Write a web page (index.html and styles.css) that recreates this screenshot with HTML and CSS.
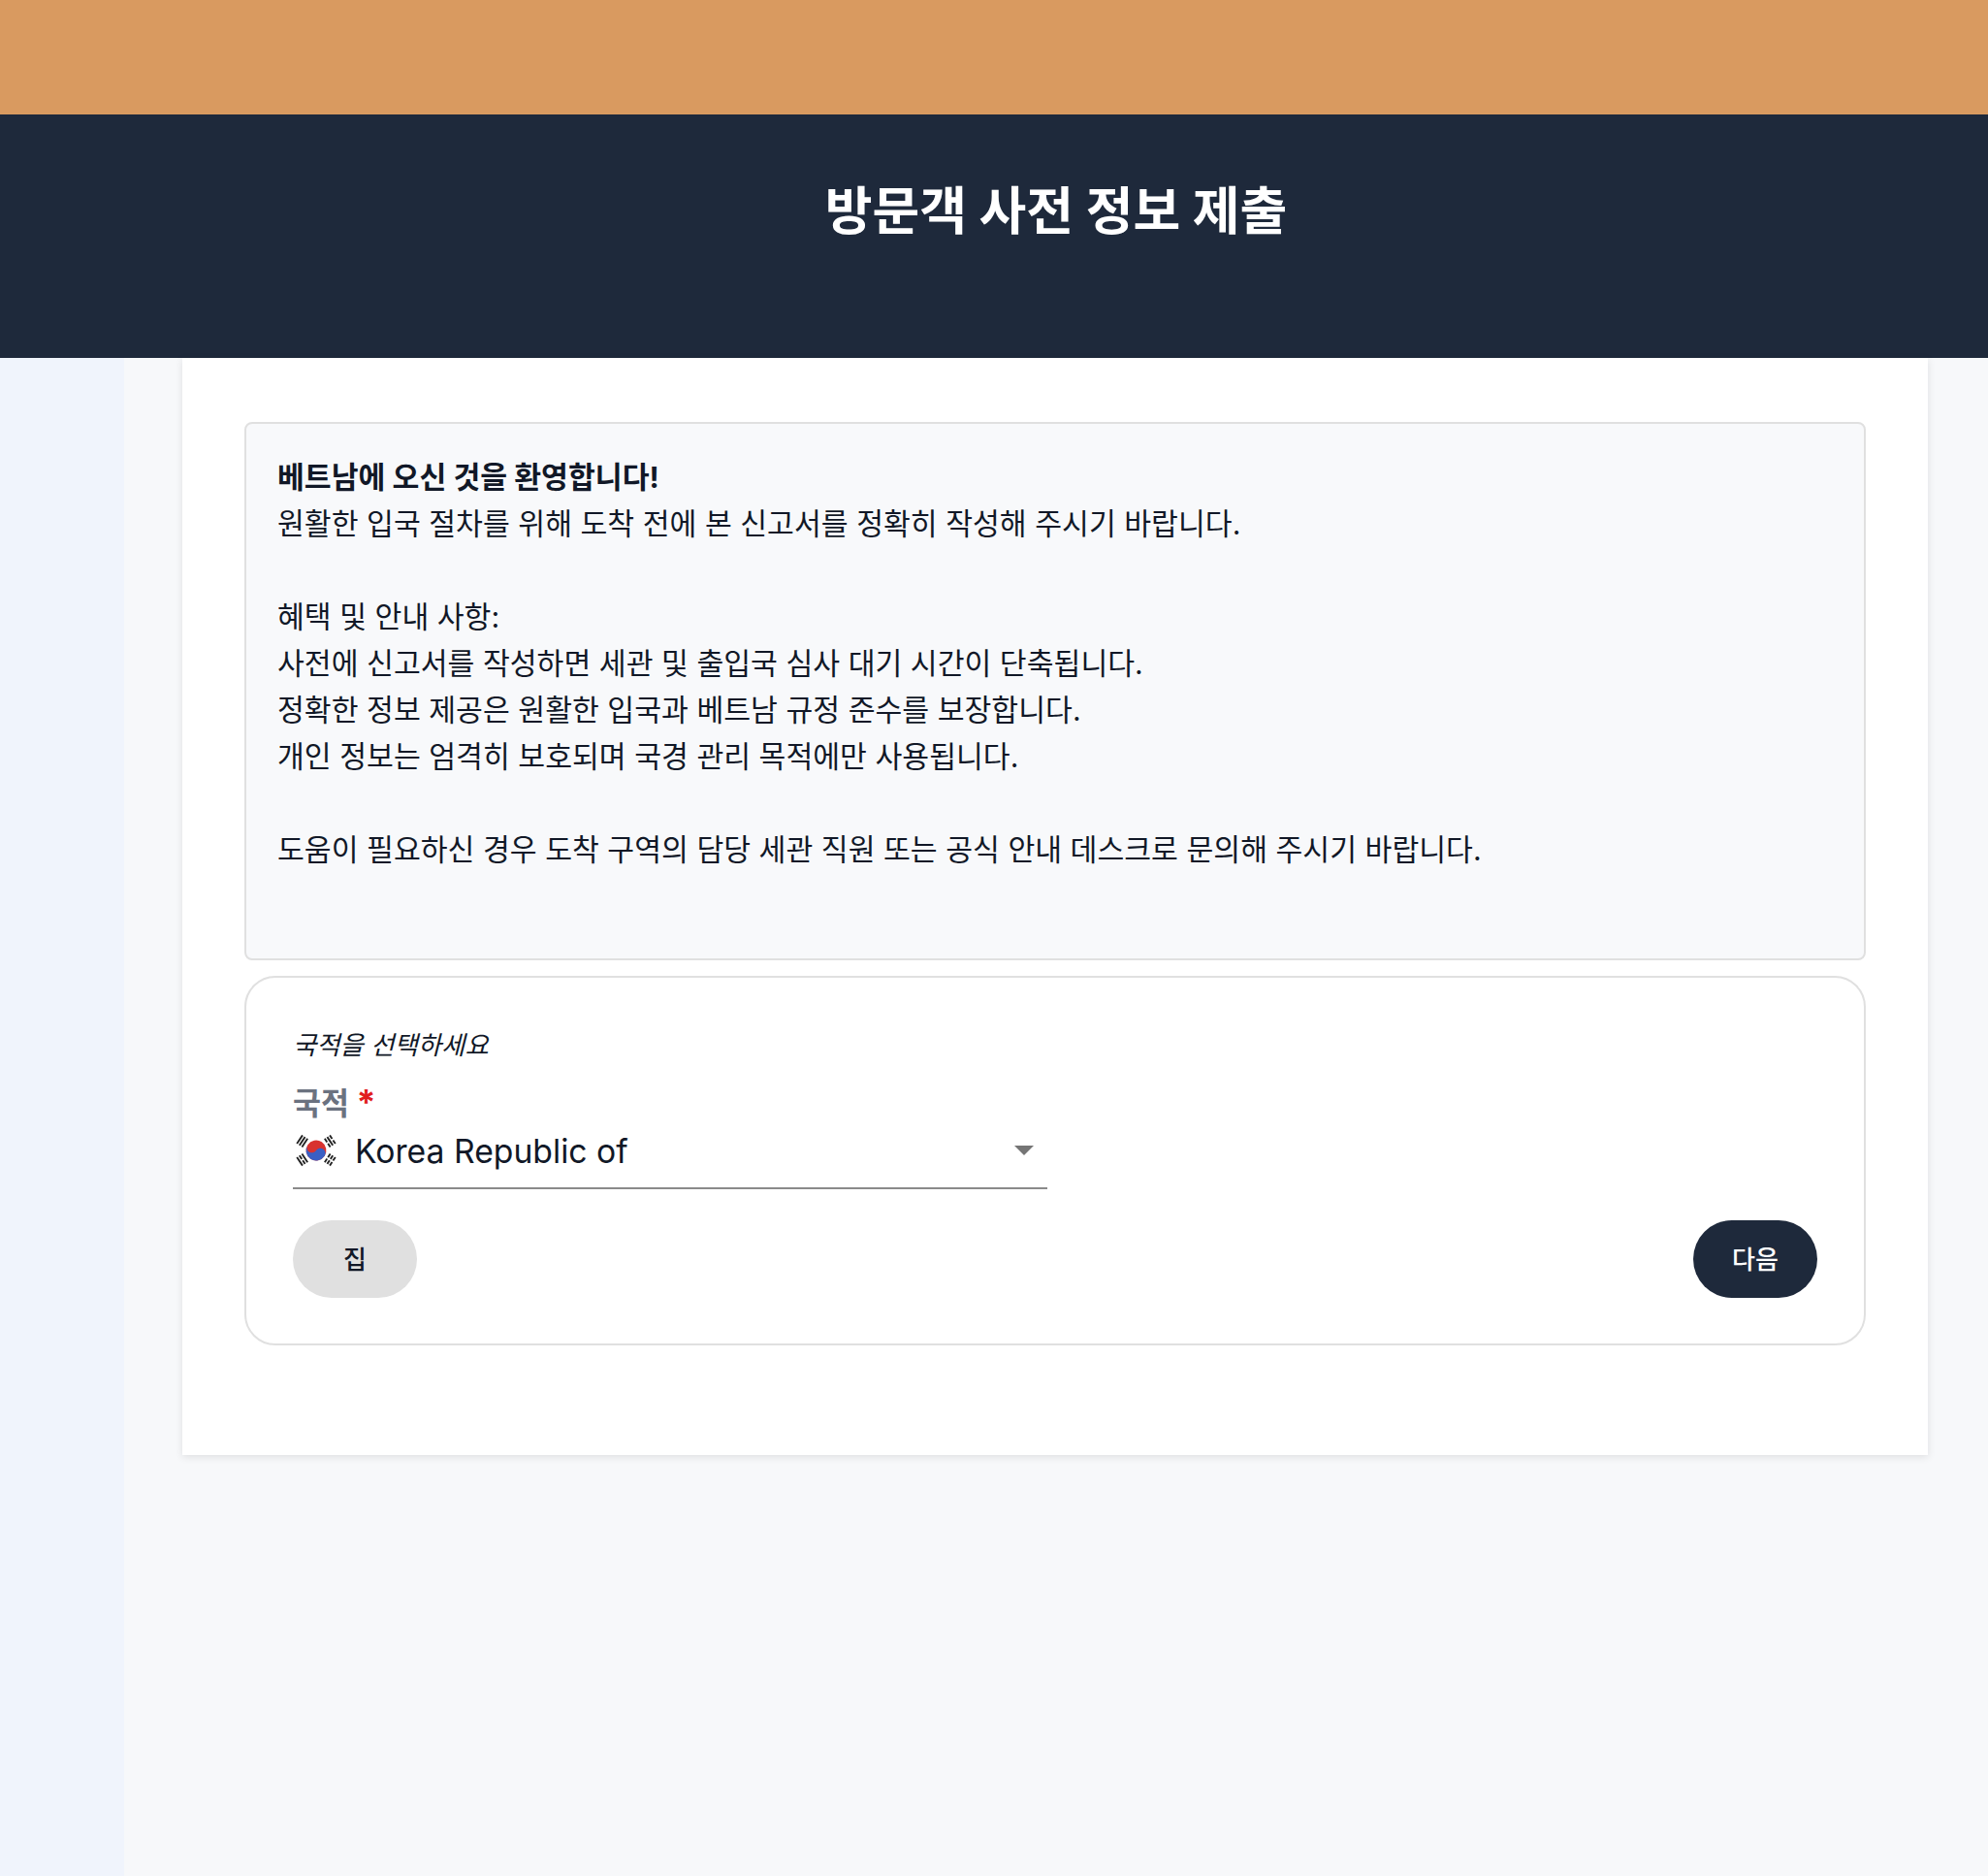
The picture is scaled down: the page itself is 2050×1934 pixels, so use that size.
FILE: index.html
```html
<!DOCTYPE html>
<html lang="ko">
<head>
    <meta charset="UTF-8">
    <title>방문객 사전 정보 제출</title>
    <link rel="stylesheet" href="styles.css">
</head>
<body>
    <!-- Top strip -->
    <div class="top-strip"></div>

    <!-- Header -->
    <div class="site-header">
        <div class="header-gap"></div>
        <h1 class="site-title">방문객 사전 정보 제출</h1>
    </div>

    <div class="page">
        <div class="side-panel"></div>

        <div class="main">
            <div class="card">
                <!-- Welcome notice -->
                <div class="notice">
                    <p class="notice-title">베트남에 오신 것을 환영합니다!</p>
                    <p>원활한 입국 절차를 위해 도착 전에 본 신고서를 정확히 작성해 주시기 바랍니다.</p>
                    <p class="blank"></p>
                    <p>혜택 및 안내 사항:</p>
                    <p>사전에 신고서를 작성하면 세관 및 출입국 심사 대기 시간이 단축됩니다.</p>
                    <p>정확한 정보 제공은 원활한 입국과 베트남 규정 준수를 보장합니다.</p>
                    <p>개인 정보는 엄격히 보호되며 국경 관리 목적에만 사용됩니다.</p>
                    <p class="blank"></p>
                    <p>도움이 필요하신 경우 도착 구역의 담당 세관 직원 또는 공식 안내 데스크로 문의해 주시기 바랍니다.</p>
                </div>

                <!-- Nationality form -->
                <div class="form-box">
                    <div class="form-hint">국적을 선택하세요</div>
                    <div class="field-label">국적 <span class="required">*</span></div>
                    <div class="select-field">
                        <svg class="flag" viewBox="-23 -16 46 32" aria-hidden="true">
                            <g transform="rotate(33.69)">
                                <circle r="10" fill="#d8322f"/>
                                <path d="M-10 0A5 5 0 0 0 0 0A5 5 0 0 1 10 0A10 10 0 0 1-10 0Z" fill="#3a5fc4"/>
                            </g>
                            <g stroke="#222" stroke-width="1.8" fill="none">
                                <path transform="rotate(213.69)" d="M13.5-5V5M16.5-5V5M19.5-5V5"/>
                                <path transform="rotate(-33.69)" d="M13.5-5V-.8M13.5.8V5M16.5-5V5M19.5-5V-.8M19.5.8V5"/>
                                <path transform="rotate(146.31)" d="M13.5-5V5M16.5-5V-.8M16.5.8V5M19.5-5V5"/>
                                <path transform="rotate(33.69)" d="M13.5-5V-.8M13.5.8V5M16.5-5V-.8M16.5.8V5M19.5-5V-.8M19.5.8V5"/>
                            </g>
                        </svg>
                        <span class="select-value">Korea Republic of</span>
                        <span class="select-arrow"></span>
                    </div>
                    <div class="form-actions">
                        <button class="btn btn-home">집</button>
                        <button class="btn btn-next">다음</button>
                    </div>
                </div>
            </div>
        </div>
    </div>
</body>
</html>
```

FILE: styles.css
```css
* {
    box-sizing: border-box;
}

body {
    font-family: Inter, "Noto Sans CJK KR", sans-serif;
    background-color: #f7f8fa;
    color: #1e293b;
    margin: 0;
    min-height: 1934px;
    display: flex;
    flex-direction: column;
}

.top-strip {
    height: 118px;
    background-color: #d99a60;
}

/* Header */
.site-header {
    height: 251px;
    background-color: #1e293b;
    display: flex;
}

.header-gap {
    width: 128px;
}

.site-title {
    flex: 1;
    margin: 0;
    padding-top: 64px;
    text-align: center;
    font-size: 53px;
    line-height: 72px;
    font-weight: 700;
    color: #fff;
}

/* Page body */
.page {
    flex: 1;
    display: flex;
}

.side-panel {
    width: 128px;
    background-color: #f0f4fc;
}

.main {
    flex: 1;
    padding-left: 60px;
}

.card {
    width: 1800px;
    height: 1131px;
    background-color: #fff;
    padding: 66px 64px 0;
    box-shadow: 0 2px 8px rgba(0, 0, 0, 0.1);
}

/* Welcome notice */
.notice {
    height: 555px;
    background-color: #f8f9fb;
    border: 2px solid #e0e0e0;
    border-radius: 8px;
    padding: 31px 32px;
    font-size: 30.27px;
    line-height: 48px;
    color: #111827;
}

.notice p {
    margin: 0;
}

.notice .notice-title {
    font-weight: 700;
}

.notice .blank {
    height: 48px;
}

/* Nationality form */
.form-box {
    height: 381px;
    margin-top: 16px;
    background-color: #fff;
    border: 2px solid #e0e0e0;
    border-radius: 32px;
    padding: 49px 48px 0;
}

.form-hint {
    font-size: 26.4px;
    line-height: 40px;
    font-style: italic;
    color: #111827;
}

.field-label {
    margin-top: 21px;
    font-size: 31.5px;
    line-height: 40px;
    font-weight: 700;
    color: #6b7280;
}

.required {
    font-size: 36px;
    line-height: 0;
    color: #e11d1d;
}

.select-field {
    width: 778px;
    height: 68px;
    display: flex;
    align-items: center;
    border-bottom: 2px solid #8a8a8a;
    padding-bottom: 10px;
}

.flag {
    width: 48px;
    height: 34px;
    margin-right: 16px;
}

.select-value {
    flex: 1;
    font-size: 33.7px;
    color: #111827;
}

.select-arrow {
    width: 0;
    height: 0;
    margin-right: 14px;
    border-left: 10px solid transparent;
    border-right: 10px solid transparent;
    border-top: 10px solid #757575;
}

.form-actions {
    margin-top: 32px;
    display: flex;
    justify-content: space-between;
}

.btn {
    width: 128px;
    height: 80px;
    padding: 0 0 4px;
    border: none;
    border-radius: 40px;
    font-family: inherit;
    font-size: 26px;
    font-weight: 500;
    cursor: pointer;
}

.btn-home {
    background-color: #e0e0e0;
    color: #111827;
}

.btn-next {
    background-color: #1e293b;
    color: #fff;
}
```
